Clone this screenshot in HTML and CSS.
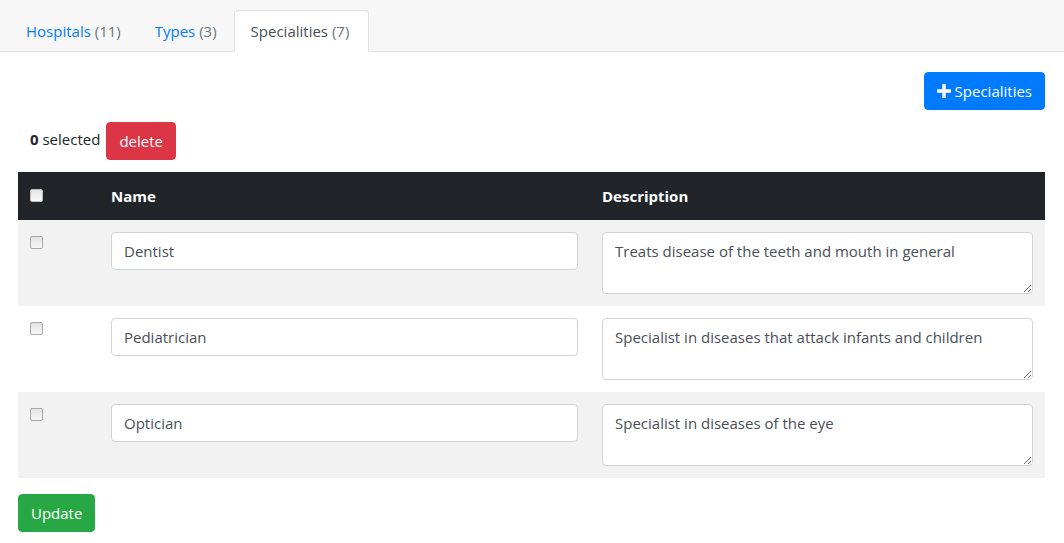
FILE: index.html
```html
<!DOCTYPE html>
<html>
<head>
<meta charset="utf-8">
<link rel="stylesheet" href="styles.css">
</head>
<body>
<div class="topbar">
  <ul class="tabs">
    <li><a class="tab">Hospitals <span class="count">(11)</span></a></li>
    <li><a class="tab">Types <span class="count">(3)</span></a></li>
    <li><a class="tab active">Specialities <span class="count">(7)</span></a></li>
  </ul>
</div>
<div class="content">
  <div class="actions">
    <button class="btn btn-primary"><svg class="plus" viewBox="0 0 14 14" width="14" height="14"><path d="M5.3 0h3.4v5.3H14v3.4H8.7V14H5.3V8.7H0V5.3h5.3z" fill="#fff"/></svg>Specialities</button>
  </div>
  <div class="selection">
    <span class="sel-text"><b>0</b> selected</span>
    <button class="btn btn-danger">delete</button>
  </div>
  <table class="grid">
    <thead>
      <tr>
        <th class="c-check"><input class="chk chk-head" type="checkbox"></th>
        <th class="c-name">Name</th>
        <th class="c-desc">Description</th>
      </tr>
    </thead>
    <tbody>
      <tr class="odd">
        <td class="c-check"><input class="chk" type="checkbox"></td>
        <td><input class="field" type="text" value="Dentist"></td>
        <td><textarea class="field area" rows="2">Treats disease of the teeth and mouth in general</textarea></td>
      </tr>
      <tr>
        <td class="c-check"><input class="chk" type="checkbox"></td>
        <td><input class="field" type="text" value="Pediatrician"></td>
        <td><textarea class="field area" rows="2">Specialist in diseases that attack infants and children</textarea></td>
      </tr>
      <tr class="odd">
        <td class="c-check"><input class="chk" type="checkbox"></td>
        <td><input class="field" type="text" value="Optician"></td>
        <td><textarea class="field area" rows="2">Specialist in diseases of the eye</textarea></td>
      </tr>
    </tbody>
  </table>
  <button class="btn btn-success">Update</button>
</div>
</body>
</html>
```
FILE: styles.css
```css
* { box-sizing: border-box; }
body {
  margin: 0;
  font-family: "Open Sans", "Noto Sans", sans-serif;
  font-size: 15px;
  line-height: 24px;
  color: #212529;
  background: #fff;
}
.topbar {
  background: #f7f7f7;
  border-bottom: 1px solid #dee2e6;
  padding: 10px 0 0 9px;
  height: 52px;
}
.tabs {
  list-style: none;
  margin: 0;
  padding: 0;
  display: flex;
}
.tab {
  display: block;
  padding: 8px 16px 8px 16px;
  border: 1px solid transparent;
  border-top-left-radius: 4px;
  border-top-right-radius: 4px;
  color: #007bff;
  height: 42px;
}
.tab .count { color: #6c757d; }
.tab.active {
  background: #fff;
  border-color: #dee2e6 #dee2e6 #fff;
  color: #495057;
  padding-right: 19px;
}
.tab.active .count { color: #6c757d; }
.content {
  padding: 20px 19px 0 18px;
}
.actions {
  display: flex;
  justify-content: flex-end;
}
.btn {
  font-family: inherit;
  font-size: 15px;
  line-height: 24px;
  padding: 6px 12px;
  border: 1px solid transparent;
  border-radius: 4px;
  color: #fff;
  height: 38px;
  display: inline-flex;
  align-items: center;
}
.btn-primary { background: #007bff; border-color: #007bff; }
.btn-danger { background: #dc3545; border-color: #dc3545; }
.btn-success { background: #28a745; border-color: #28a745; margin-top: 16px; }
.plus { margin-right: 4px; }
.selection {
  display: flex;
  align-items: center;
  margin-top: 12px;
  padding-left: 12px;
}
.sel-text { margin-top: -4px; margin-right: 6px; }
.grid {
  width: 100%;
  border-collapse: collapse;
  margin-top: 12px;
}
.grid th, .grid td {
  padding: 12px;
  vertical-align: top;
  text-align: left;
}
.grid thead th {
  background: #212529;
  color: #fff;
  font-weight: 700;
}
.c-check { width: 81px; }
.c-name { width: 491px; }
.chk {
  -webkit-appearance: none;
  appearance: none;
  display: block;
  margin: 4px 0 0 0;
  width: 13px;
  height: 13px;
  border: 1px solid #a8a8a8;
  border-radius: 2px;
  background: linear-gradient(#e3e3e3, #f6f6f6);
}
.chk-head {
  margin-top: 5px;
  border-color: #bdbdbd;
  background: linear-gradient(#e6e6e6, #f8f8f8);
}
.grid tbody tr.odd { background: #f2f2f2; }
.field {
  display: block;
  width: 100%;
  height: 38px;
  padding: 6px 12px;
  font-family: inherit;
  font-size: 15px;
  line-height: 24px;
  color: #495057;
  background: #fff;
  border: 1px solid #ced4da;
  border-radius: 4px;
}
.area {
  height: 62px;
  resize: vertical;
}
```
